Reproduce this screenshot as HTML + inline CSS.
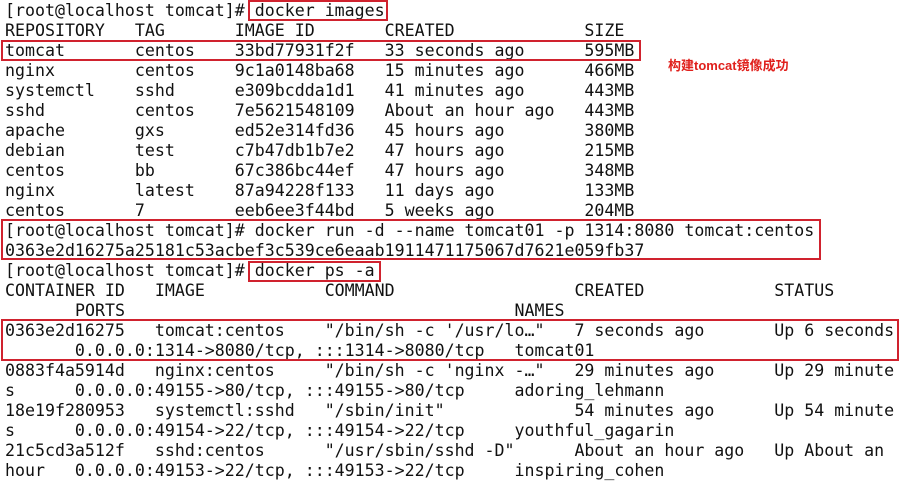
<!DOCTYPE html>
<html><head><meta charset="utf-8"><style>
body{margin:0;width:908px;height:481px;background:#fff;overflow:hidden;position:relative}
pre{margin:0;position:absolute;left:5px;top:1px;font-family:"DejaVu Sans Mono","Liberation Mono",monospace;font-size:16.6px;line-height:20px;color:#111}
.b{position:absolute;border:2px solid #d0222e;box-sizing:border-box}
.n{position:absolute;left:668px;top:55px;color:#e0201c;font:bold 13px "Liberation Sans","Noto Sans CJK SC",sans-serif}
.p{position:absolute;left:75px}
</style></head><body>
<pre>[root@localhost tomcat]# docker images
REPOSITORY   TAG       IMAGE ID       CREATED             SIZE
tomcat       centos    33bd77931f2f   33 seconds ago      595MB
nginx        centos    9c1a0148ba68   15 minutes ago      466MB
systemctl    sshd      e309bcdda1d1   41 minutes ago      443MB
sshd         centos    7e5621548109   About an hour ago   443MB
apache       gxs       ed52e314fd36   45 hours ago        380MB
debian       test      c7b47db1b7e2   47 hours ago        215MB
centos       bb        67c386bc44ef   47 hours ago        348MB
nginx        latest    87a94228f133   11 days ago         133MB
centos       7         eeb6ee3f44bd   5 weeks ago         204MB
[root@localhost tomcat]# docker run -d --name tomcat01 -p 1314:8080 tomcat:centos
0363e2d16275a25181c53acbef3c539ce6eaab1911471175067d7621e059fb37
[root@localhost tomcat]# docker ps -a
CONTAINER ID   IMAGE            COMMAND                  CREATED             STATUS
                                                   NAMES
0363e2d16275   tomcat:centos    "/bin/sh -c '/usr/lo…"   7 seconds ago       Up 6 seconds
       0.0.0.0:1314->8080/tcp, :::1314->8080/tcp   tomcat01
0883f4a5914d   nginx:centos     "/bin/sh -c 'nginx -…"   29 minutes ago      Up 29 minute
s      0.0.0.0:49155->80/tcp, :::49155->80/tcp     adoring_lehmann
18e19f280953   systemctl:sshd   "/sbin/init"             54 minutes ago      Up 54 minute
s      0.0.0.0:49154->22/tcp, :::49154->22/tcp     youthful_gagarin
21c5cd3a512f   sshd:centos      "/usr/sbin/sshd -D"      About an hour ago   Up About an
hour   0.0.0.0:49153->22/tcp, :::49153->22/tcp     inspiring_cohen</pre>
<pre class="p" style="top:301px">PORTS</pre>
<div class="b" style="left:248px;top:0;width:140px;height:21px"></div>
<div class="b" style="left:1px;top:40px;width:640px;height:21px"></div>
<div class="b" style="left:1px;top:219px;width:820px;height:41px"></div>
<div class="b" style="left:248px;top:261px;width:133px;height:21px"></div>
<div class="b" style="left:1px;top:319px;width:898px;height:42px"></div>
<div class="n">构建tomcat镜像成功</div>
</body></html>
